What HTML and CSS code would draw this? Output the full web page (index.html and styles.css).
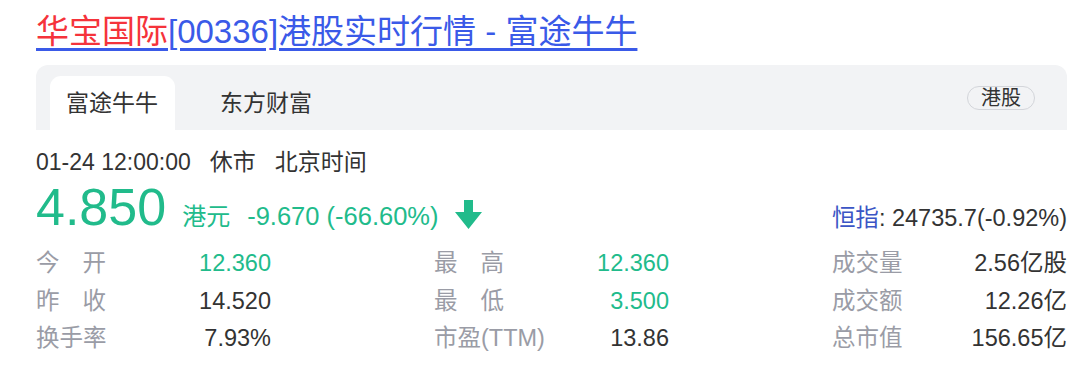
FILE: index.html
```html
<!DOCTYPE html>
<html lang="zh-CN">
<head>
    <meta charset="UTF-8">
    <meta name="viewport" content="width=device-width, initial-scale=1.0">
    <title>华宝国际[00336]港股实时行情</title>
    <link rel="stylesheet" href="styles.css">
</head>
<body>
    <div class="card">
        <h3 class="title"><a href="#"><em>华宝国际</em>[00336]港股实时行情 - 富途牛牛</a></h3>

        <div class="tabs">
            <div class="tab active">富途牛牛</div>
            <div class="tab">东方财富</div>
            <span class="tag">港股</span>
        </div>

        <div class="time">01-24 12:00:00<span class="sep"></span>休市<span class="sep"></span>北京时间</div>

        <div class="quote">
            <div class="price">
                <span class="now">4.850</span>
                <span class="unit">港元</span>
                <span class="change">-9.670 (-66.60%)</span>
                <svg class="arrow" width="27" height="30" viewBox="0 0 27 30">
                    <path d="M9 0 H18 V12 H27 L13.5 29 L0 12 H9 Z" fill="#21bb8b"/>
                </svg>
            </div>
            <div class="index"><a href="#">恒指</a>: 24735.7(-0.92%)</div>
        </div>

        <!-- three columns of label / value pairs -->
        <div class="stats">
            <div class="col">
                <div class="row"><span class="label">今开</span><span class="val green">12.360</span></div>
                <div class="row"><span class="label">昨收</span><span class="val">14.520</span></div>
                <div class="row"><span class="label">换手率</span><span class="val">7.93%</span></div>
            </div>
            <div class="col">
                <div class="row"><span class="label">最高</span><span class="val green">12.360</span></div>
                <div class="row"><span class="label">最低</span><span class="val green">3.500</span></div>
                <div class="row"><span class="label">市盈(TTM)</span><span class="val">13.86</span></div>
            </div>
            <div class="col">
                <div class="row"><span class="label">成交量</span><span class="val">2.56亿股</span></div>
                <div class="row"><span class="label">成交额</span><span class="val">12.26亿</span></div>
                <div class="row"><span class="label">总市值</span><span class="val">156.65亿</span></div>
            </div>
        </div>
    </div>
</body>
</html>
```

FILE: styles.css
```css
body{
    margin: 0;
    background: #fff;
    font-family: "Liberation Sans", Arial, "Noto Sans CJK SC", sans-serif;
    color: #333;
}
.card{
    width: 1031px;
    padding: 12px 0 0 36px;
}
.title{
    margin: 0;
    font-size: 33px;
    font-weight: normal;
    line-height: 40px;
}
.title a{
    color: #3a5ae8;
    text-decoration: underline;
    text-underline-offset: 5px;
}
.title em{
    font-style: normal;
    color: #f5333b;
}
.tabs{
    display: flex;
    align-items: flex-end;
    gap: 29px;
    height: 65px;
    margin-top: 13px;
    padding: 0 32px 0 14px;
    background: #f2f3f5;
    border-radius: 12px 12px 0 0;
}
.tab{
    height: 54px;
    line-height: 54px;
    padding: 0 17px 0 16px;
    font-size: 23px;
    color: #333;
}
.tab.active{
    background: #fff;
    border-radius: 11px 11px 0 0;
}
.tag{
    align-self: center;
    margin-left: auto;
    height: 22px;
    line-height: 22px;
    padding: 0 13px;
    font-size: 20px;
    color: #333;
    border: 1px solid #d3d5da;
    border-radius: 12px;
}
.time{
    margin-top: 17px;
    font-size: 23px;
    line-height: 30px;
    color: #333;
}
.sep{
    display: inline-block;
    width: 19px;
}
.quote{
    display: flex;
    align-items: flex-end;
    justify-content: space-between;
    margin-top: 2px;
    height: 56px;
}
.price{
    display: flex;
    align-items: baseline;
    color: #21bb8b;
}
.now{
    font-size: 52px;
    line-height: 56px;
}
.unit{
    margin-left: 16px;
    font-size: 24px;
}
.change{
    margin-left: 17px;
    font-size: 25.5px;
}
.arrow{
    align-self: center;
    margin: 16px 0 0 16px;
}
.index{
    font-size: 23.5px;
    line-height: 30px;
    margin-bottom: 2px;
    color: #333;
}
.index a{
    color: #3b55c5;
    text-decoration: none;
}
.stats{
    display: flex;
    justify-content: space-between;
    margin-top: 10px;
}
.col{
    width: 235px;
}
.row{
    display: flex;
    justify-content: space-between;
    height: 37.5px;
    line-height: 37.5px;
    font-size: 23.5px;
}
.label{
    min-width: 70px;
    text-align: justify;
    text-align-last: justify;
    color: #9a9ca6;
}
.val{
    color: #333;
}
.green{
    color: #21bb8b;
}
```
